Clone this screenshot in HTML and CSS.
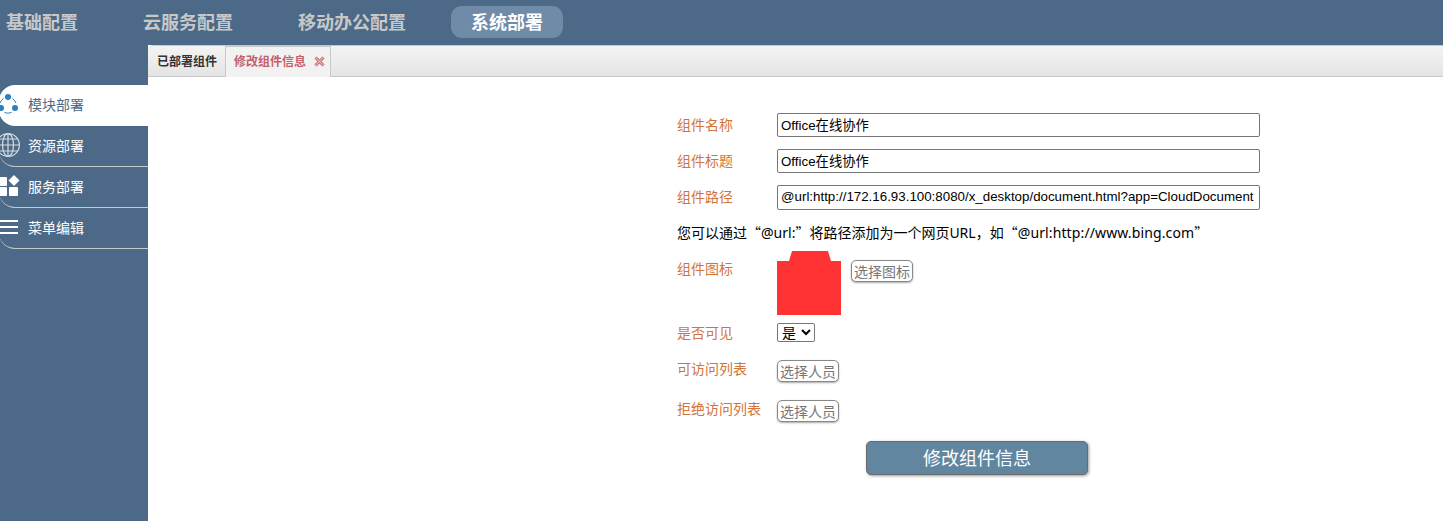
FILE: index.html
```html
<!DOCTYPE html>
<html lang="zh-CN">
<head>
<meta charset="utf-8">
<title>系统部署</title>
<link rel="stylesheet" href="styles.css">
</head>
<body>
<header class="topbar">
  <a class="topnav">基础配置</a>
  <a class="topnav">云服务配置</a>
  <a class="topnav">移动办公配置</a>
  <a class="topnav active">系统部署</a>
</header>
<div class="main">
  <aside class="sidebar">
    <div class="side-item current">
      <svg class="side-icon" viewBox="0 0 24 24"><g fill="#2a7fbd"><circle cx="12" cy="5" r="3"/><circle cx="5" cy="16" r="3"/><circle cx="19" cy="16" r="3"/></g><g fill="none" stroke="#2a7fbd" stroke-width="1"><path d="M7.500 6.500A9 9 0 0 0 4 11"/><path d="M16.500 6.500A9 9 0 0 1 20 11"/><path d="M8.500 20.500A9 9 0 0 0 15.500 20.500"/></g></svg>
      <span>模块部署</span>
    </div>
    <div class="side-item">
      <svg class="side-icon" viewBox="0 0 24 24"><g fill="none" stroke="#d5dbe1" stroke-width="1.200"><circle cx="12" cy="12" r="11.400"/><ellipse cx="12" cy="12" rx="5.500" ry="11.400"/><path d="M12 .6v22.800M.6 12h22.800M2.500 6h19M2.500 18h19"/></g></svg>
      <span>资源部署</span>
    </div>
    <div class="side-item">
      <svg class="side-icon" viewBox="0 0 24 24"><g fill="#fff"><rect x="3" y="3" width="8" height="9" rx="1"/><rect x="3" y="13" width="8" height="9" rx="1"/><rect x="13" y="13" width="9" height="9" rx="1"/><path d="M18 1l5.500 5.500L18 12l-5.500-5.500z"/></g></svg>
      <span>服务部署</span>
    </div>
    <div class="side-item">
      <svg class="side-icon" viewBox="0 0 24 24"><g fill="#fff"><rect x="3" y="5" width="19" height="2"/><rect x="3" y="11" width="19" height="2"/><rect x="3" y="17" width="19" height="2"/></g></svg>
      <span>菜单编辑</span>
    </div>
  </aside>
  <section class="content">
    <div class="tabs">
      <div class="tab">已部署组件</div>
      <div class="tab selected">修改组件信息
        <svg class="tab-close" viewBox="0 0 11 11"><path d="M1.500 1.500l8 8M9.500 1.500l-8 8" stroke="#b8606a" stroke-width="3" fill="none"/><path d="M1.500 1.500l8 8M9.500 1.500l-8 8" stroke="#f0a8a8" stroke-width="1.400" fill="none"/></svg>
      </div>
    </div>
    <form class="form">
      <div class="row row-input"><label class="lbl">组件名称</label><input class="txt" type="text" value="Office在线协作"></div>
      <div class="row row-input"><label class="lbl">组件标题</label><input class="txt" type="text" value="Office在线协作"></div>
      <div class="row row-input row-path"><label class="lbl">组件路径</label><input class="txt" type="text" value="@url:http://172.16.93.100:8080/x_desktop/document.html?app=CloudDocument"></div>
      <p class="hint">您可以通过<span class="cjk">“</span>@url:<span class="cjk">”</span>将路径添加为一个网页URL，如<span class="cjk">“</span><span class="url">@url:http://www.bing.com</span><span class="cjk">”</span></p>
      <div class="row row-icon"><label class="lbl">组件图标</label>
        <svg class="app-icon" viewBox="0 0 64 64"><path fill="#ff3333" d="M0 10H12L15 0H51L54 10H64V64H0Z"/></svg>
        <button class="btn pick-icon" type="button">选择图标</button>
      </div>
      <div class="row row-select"><label class="lbl">是否可见</label><select class="sel"><option>是</option><option>否</option></select></div>
      <div class="row row-person"><label class="lbl">可访问列表</label><button class="btn" type="button">选择人员</button></div>
      <div class="row row-person"><label class="lbl">拒绝访问列表</label><button class="btn" type="button">选择人员</button></div>
      <button class="submit" type="button">修改组件信息</button>
    </form>
  </section>
</div>
</body>
</html>
```
FILE: styles.css
```css
* { box-sizing: border-box; }
html, body { margin: 0; height: 521px; overflow: hidden; }
body {
  background: #4c6a87;
  font-family: "Liberation Sans", "Noto Sans CJK SC", sans-serif;
  font-size: 14px;
}
.topbar {
  height: 45px;
  display: flex;
  align-items: flex-start;
  padding-top: 6px;
}
.topnav {
  display: block;
  height: 32px;
  line-height: 35px;
  font-size: 18px;
  font-weight: bold;
  color: #c8c8c8;
  padding: 0 20px;
  border-radius: 11px;
  margin-right: 25px;
}
.topnav:first-child { padding-left: 6px; }
.topnav:last-child { margin-right: 0; }
.topnav.active { background: #6f8ba8; color: #fff; }
.main { display: flex; height: 476px; }
.sidebar { width: 148px; flex: none; padding-top: 40px; overflow: hidden; }
.side-item {
  height: 41px;
  display: flex;
  align-items: center;
  padding-bottom: 2px;
  color: #fff;
  border-bottom: 1px solid #c8c8c8;
  border-bottom-left-radius: 16px;
  margin-left: -1px;
}
.side-item.current {
  background: #fff;
  color: #4c6a87;
  border-bottom: 0;
  padding-bottom: 3px;
  border-radius: 16px 0 0 16px;
}
.side-icon { width: 24px; height: 24px; margin-left: -3px; margin-right: 8px; flex: none; }
.content { flex: 1; background: #fff; min-width: 0; }
.tabs {
  height: 32px;
  display: flex;
  align-items: flex-start;
  background: linear-gradient(#f4f4f4, #e4e4e4);
  border-bottom: 1px solid #c8c8c8;
  border-top: 1px solid #c8c8c8;
  border-top-left-radius: 6px;
}
.tab {
  height: 30px;
  line-height: 32px;
  padding: 0 8px 0 9px;
  font-size: 12px;
  font-weight: bold;
  color: #333;
}
.tab.selected {
  display: flex;
  align-items: center;
  gap: 8px;
  background: #f2f2f2;
  color: #c4606a;
  border: 1px solid #c8c8c8;
  border-bottom: 0;
  height: 31px;
  padding: 0 5px 0 8px;
}
.tab-close { width: 11px; height: 11px; margin-top: -1px; }
.form { padding: 36px 0 0 529px; color: #d2753a; }
.row { display: flex; }
.lbl { width: 100px; flex: none; color: #d2753a; }
.row-input { height: 36px; }
.row-input .lbl { line-height: 24px; }
.txt {
  width: 483px;
  height: 24px;
  border: 1px solid #767676;
  border-radius: 2px;
  padding: 0 3px 2px;
  font: 13.333px "Liberation Sans", "Noto Sans CJK SC", sans-serif;
  color: #000;
  background: #fff;
}
.row-path .txt { height: 25px; }
.hint {
  margin: 1px 0 0;
  height: 29px;
  line-height: 20px;
  color: #000;
  font-size: 14px;
  font-family: "Noto Sans", "Noto Sans CJK SC", sans-serif;
}
.cjk { font-family: "Noto Sans CJK SC", sans-serif; }
.url { letter-spacing: .12px; }
.row-icon { height: 64px; }
.row-icon .lbl { line-height: 24px; padding-top: 6px; }
.app-icon { width: 64px; height: 64px; flex: none; }
.pick-icon { margin: 9px 0 0 10px; }
.btn {
  width: 62px;
  height: 22px;
  padding: 0;
  font: 14px "Liberation Sans", "Noto Sans CJK SC", sans-serif;
  color: #777;
  background: #fff;
  border: 1px solid #888;
  border-radius: 5px;
  box-shadow: 0 1px 2px #aaa;
}
.row-select { margin-top: 8px; height: 20px; }
.row-select .lbl { line-height: 20px; }
.sel {
  width: 38px;
  height: 19px;
  font: 14px "Liberation Sans", "Noto Sans CJK SC", sans-serif;
  color: #000;
  background: #fff;
  border: 1px solid #767676;
  border-radius: 2px;
  padding: 0;
}
.row-person { height: 40px; }
.row-select + .row-person { margin-top: 17px; }
.row-person .lbl { line-height: 18px; }
.submit {
  display: block;
  width: 222px;
  height: 34px;
  margin: 1px 0 0 189px;
  background: #62869f;
  color: #fff;
  font: 18px "Liberation Sans", "Noto Sans CJK SC", sans-serif;
  border: 1px solid #6a6a6a;
  border-radius: 5px;
  box-shadow: 1px 1px 3px #999;
  padding: 0 0 2px;
}
```
